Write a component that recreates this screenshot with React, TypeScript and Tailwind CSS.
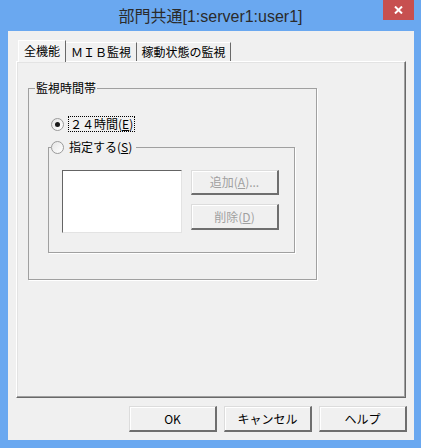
import React from 'react';

const font = { fontFamily: '"Noto Sans CJK JP", "Liberation Sans", sans-serif' };
const titleFont = { fontFamily: '"Liberation Sans", "Noto Sans CJK JP", sans-serif' };

function Radio({ checked }: { checked?: boolean }) {
  return (
    <span className="relative flex h-[13px] w-[13px] shrink-0 items-center justify-center rounded-full border border-[#9a9a9a] bg-[linear-gradient(135deg,#e6e6e6,#ffffff)]">
      {checked && <span className="h-[5px] w-[5px] rounded-full bg-[#1a1a1a]" />}
    </span>
  );
}

function Btn({ children, disabled, className = '' }: { children: React.ReactNode; disabled?: boolean; className?: string }) {
  return (
    <div
      className={`flex items-center justify-center border-t border-l border-r-2 border-b-2 border-t-[#dcdcdc] border-l-[#dcdcdc] border-r-[#6e6e6e] border-b-[#6e6e6e] bg-[#f0f0f0] text-[12px] leading-none shadow-[inset_1px_1px_0_#ffffff] ${
        disabled ? 'text-[#a0a0a0]' : 'text-black'
      } ${className}`}
    >
      {children}
    </div>
  );
}

export default function App() {
  return (
    <div className="flex h-[448px] w-[421px] flex-col bg-[#6aa8f0]" style={font}>
      {/* title bar */}
      <div className="relative flex h-[31px] shrink-0 items-center justify-center">
        <span className="pt-[2px] text-[16px] text-[#2b2b2b]" style={titleFont}>
          部門共通[1:server1:user1]
        </span>
        <div className="absolute right-[7px] top-0 flex h-[20px] w-[31px] items-center justify-center bg-[#c75050]">
          <svg width="9" height="8" viewBox="0 0 9 8">
            <path d="M1 0.5 L8 7.5 M8 0.5 L1 7.5" stroke="#fff" strokeWidth="2" />
          </svg>
        </div>
      </div>

      {/* client */}
      <div className="ml-[8px] mr-[7px] mb-[8px] flex flex-1 flex-col bg-[#f0f0f0]">
        {/* tabs */}
        <div className="ml-[10px] mt-[9px] flex h-[21px] items-end">
          <div className="relative z-10 -mb-[1px] flex h-[22px] w-[48px] items-start justify-center border-t border-l border-r border-t-white border-l-white border-r-[#696969] bg-[#f4f4f4] pt-[3px] text-[12px] leading-[14px] text-black">
            全機能
          </div>
          <div className="flex h-[19px] w-[71px] items-start justify-center border-t border-r border-t-white border-r-[#696969] pt-[2px] text-[12px] leading-[14px] text-black">
            ＭＩＢ監視
          </div>
          <div className="flex h-[19px] w-[94px] items-start justify-center border-t border-r border-t-white border-r-[#696969] pt-[2px] text-[12px] leading-[14px] text-black">
            稼動状態の監視
          </div>
        </div>

        {/* tab panel */}
        <div className="ml-[8px] flex h-[337px] w-[390px] flex-col border-t border-l border-r border-b border-t-white border-l-white border-r-[#696969] border-b-[#696969] bg-[#f0f0f0] shadow-[inset_-1px_-1px_0_#a0a0a0,inset_1px_1px_0_#e3e3e3]">
          {/* group: 監視時間帯 */}
          <div className="relative ml-[11px] mt-[26px] h-[192px] w-[289px] border border-[#a0a0a0] shadow-[1px_1px_0_#ffffff]">
            <span className="absolute -top-[8px] left-[6px] bg-[#f0f0f0] px-[1px] text-[12px] leading-[14px] text-black">
              監視時間帯
            </span>

            <div className="ml-[22px] mt-[27px] flex h-[16px] items-center">
              <Radio checked />
              <span className="ml-[4px] border border-dotted border-black px-[1px] text-[12px] leading-[14px] text-black">
                ２４時間(<span className="underline">E</span>)
              </span>
            </div>

            {/* inner group: 指定する */}
            <div className="relative ml-[19px] mt-[15px] h-[106px] w-[247px] border border-[#a0a0a0] shadow-[1px_1px_0_#ffffff]">
              <div className="absolute -top-[8px] left-[2px] flex items-center bg-[#f0f0f0] pr-[4px]">
                <Radio />
                <span className="ml-[5px] text-[12px] leading-[14px] text-black">
                  指定する(<span className="underline">S</span>)
                </span>
              </div>

              <div className="ml-[13px] mt-[22px] flex gap-[9px]">
                <div className="h-[63px] w-[120px] border-t border-l border-r border-b border-t-[#646464] border-l-[#646464] border-r-[#e3e3e3] border-b-[#e3e3e3] bg-white" />
                <div className="flex flex-col gap-[9px]">
                  <Btn disabled className="h-[25px] w-[88px]">
                    追加(<span className="underline">A</span>)...
                  </Btn>
                  <Btn disabled className="h-[26px] w-[88px]">
                    削除(<span className="underline">D</span>)
                  </Btn>
                </div>
              </div>
            </div>
          </div>
        </div>

        {/* bottom buttons */}
        <div className="mr-[7px] mt-[8px] flex justify-end gap-[7px]">
          <Btn className="h-[26px] w-[88px]">OK</Btn>
          <Btn className="h-[26px] w-[88px]">キャンセル</Btn>
          <Btn className="h-[26px] w-[88px]">ヘルプ</Btn>
        </div>
      </div>
    </div>
  );
}
